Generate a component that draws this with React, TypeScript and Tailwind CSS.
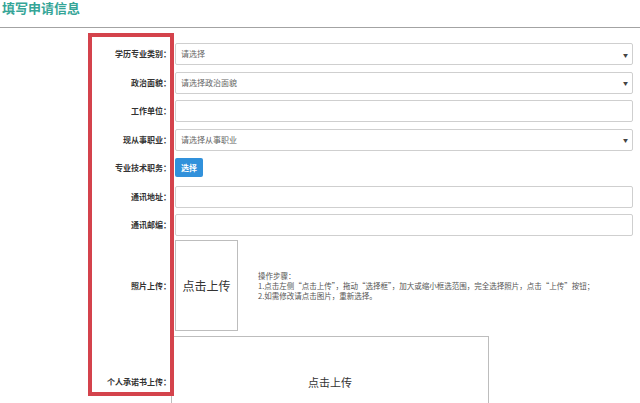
import { ReactNode } from "react";

const font = "font-['Noto_Sans_CJK_SC','Noto_Sans',sans-serif]";

function Label({ children }: { children: ReactNode }) {
  return (
    <div className="w-[79px] shrink-0 text-right text-[8px] font-bold leading-[10px] text-[#333]">
      {children}
    </div>
  );
}

function SelectBox({ text }: { text: string }) {
  return (
    <div className="flex h-[22px] flex-1 items-center justify-between rounded-[2px] border border-[#cfcfcf] bg-white pl-[5px] pr-[4px]">
      <span className="text-[8px] leading-[10px] text-[#666]">{text}</span>
      <span className="text-[5px] leading-[5px] text-[#444]">▼</span>
    </div>
  );
}

function TextBox() {
  return <input className="h-[22px] flex-1 rounded-[2px] border border-[#cfcfcf] bg-white px-[5px] text-[8px] outline-none" />;
}

function Row({ label, children }: { label: string; children: ReactNode }) {
  return (
    <div className="flex h-[22px] items-center gap-[4px]">
      <Label>{label}</Label>
      {children}
    </div>
  );
}

export default function App() {
  return (
    <div className={`relative h-[403px] w-[640px] overflow-hidden bg-white ${font}`}>
      <h2 className="pl-[2px] text-[13px] font-bold leading-[15px] text-[#35a597]">填写申请信息</h2>
      <div className="mt-[12px] h-px w-full bg-[#a3a3a3]" />

      <div className="ml-[92px] mt-[15px] w-[541px]">
        <div className="flex flex-col gap-[6.5px]">
          <Row label="学历专业类别：">
            <SelectBox text="请选择" />
          </Row>
          <Row label="政治面貌：">
            <SelectBox text="请选择政治面貌" />
          </Row>
          <Row label="工作单位：">
            <TextBox />
          </Row>
          <Row label="现从事职业：">
            <SelectBox text="请选择从事职业" />
          </Row>
          <div className="flex h-[22px] items-start gap-[4px]">
            <div className="flex h-[22px] items-center">
              <Label>专业技术职务：</Label>
            </div>
            <button className="mt-[1px] flex h-[19px] w-[28px] items-center justify-center rounded-[2px] bg-[#3191db] text-[8px] font-bold text-white">
              选择
            </button>
          </div>
          <Row label="通讯地址：">
            <TextBox />
          </Row>
          <Row label="通讯邮编：">
            <TextBox />
          </Row>
        </div>

        <div className="mt-[4px] flex items-center gap-[4px]">
          <Label>照片上传：</Label>
          <div className="flex h-[91px] w-[63px] items-center justify-center border border-[#bdbdbd] text-[12px] text-[#333]">
            点击上传
          </div>
          <div className="ml-[16px] text-[7.5px] leading-[10px] text-[#555]">
            <p>操作步骤：</p>
            <p>1.点击左侧“点击上传”，拖动“选择框”，加大或缩小框选范围，完全选择照片，点击“上传”按钮；</p>
            <p>2.如需修改请点击图片，重新选择。</p>
          </div>
        </div>

        <div className="mt-[5px] flex items-center gap-0">
          <Label>个人承诺书上传：</Label>
          <div className="flex h-[92px] w-[318px] items-center justify-center border border-[#bdbdbd] text-[11px] text-[#333]">
            点击上传
          </div>
        </div>
      </div>

      <div className="absolute left-[88px] top-[33px] h-[363px] w-[86px] border-[4px] border-[#d4434c]" />
    </div>
  );
}
